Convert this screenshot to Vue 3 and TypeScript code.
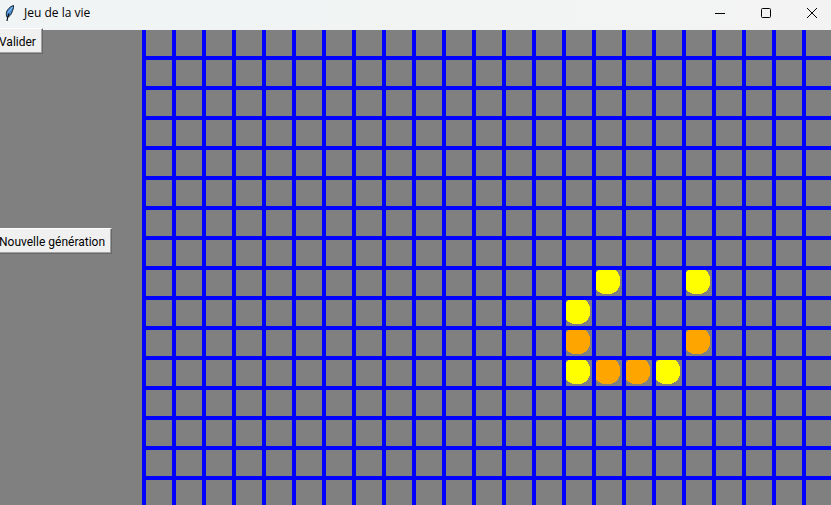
<script setup lang="ts">
import { ref } from 'vue'

interface Cell {
  col: number
  row: number
  state: 'newborn' | 'dying'
}

const SIZE = 30

const cells = ref<Cell[]>([
  { col: 15, row: 8, state: 'newborn' },
  { col: 18, row: 8, state: 'newborn' },
  { col: 14, row: 9, state: 'newborn' },
  { col: 14, row: 10, state: 'dying' },
  { col: 18, row: 10, state: 'dying' },
  { col: 14, row: 11, state: 'newborn' },
  { col: 15, row: 11, state: 'dying' },
  { col: 16, row: 11, state: 'dying' },
  { col: 17, row: 11, state: 'newborn' },
])
</script>

<template>
  <div class="window">
    <header class="titlebar">
      <svg class="feather" viewBox="0 0 12 18" aria-hidden="true">
        <path d="M9.500 1.500C6 2.500 2.500 6 2.300 9.500C2.200 11 2.500 12.500 3.300 13.500C5.500 12.500 7.300 10.500 8 8C8.800 6 9.800 4 9.500 1.500Z" fill="#4a8fd8" stroke="#10202c" />
        <path d="M5 9.500C4 12 3.300 14 3 17" fill="none" stroke="#0b1118" stroke-width="1.200" />
        <path d="M8.500 3L4.200 8.500" fill="none" stroke="#8fc0f2" />
      </svg>
      <h1 class="title">Jeu de la vie</h1>
      <nav class="controls" aria-label="Jeu de la vie">
        <button type="button" class="control">
          <svg viewBox="0 0 12 12" aria-hidden="true"><path d="M1 6.500H11" /></svg>
        </button>
        <button type="button" class="control">
          <svg viewBox="0 0 12 12" aria-hidden="true"><rect x="1.500" y="1.500" width="9" height="9" rx="1" /></svg>
        </button>
        <button type="button" class="control">
          <svg viewBox="0 0 12 12" aria-hidden="true"><path d="M1 1L11 11M11 1L1 11" /></svg>
        </button>
      </nav>
    </header>
    <main class="content">
      <aside class="sidebar">
        <button type="button" class="action">Valider</button>
        <button type="button" class="action">Nouvelle génération</button>
      </aside>
      <svg class="board" shape-rendering="crispEdges">
        <defs>
          <pattern id="lines" :width="SIZE" :height="SIZE" patternUnits="userSpaceOnUse">
            <path d="M0 0H4V30H0ZM4 26H30V30H4Z" fill="#0000ff" />
          </pattern>
        </defs>
        <rect
          v-for="cell in cells"
          :key="`${cell.col}-${cell.row}`"
          :class="cell.state"
          :x="cell.col * SIZE + 2"
          :y="cell.row * SIZE - 2"
          width="26"
          height="26"
          rx="11"
        />
        <rect width="100%" height="100%" fill="url(#lines)" />
      </svg>
    </main>
  </div>
</template>

<style>
body {
  margin: 0;
}
</style>

<style scoped>
.window {
  display: flex;
  flex-direction: column;
  height: 100vh;
  overflow: hidden;
  background: #808080;
  color: #000;
  font-family: "Open Sans", "Noto Sans", sans-serif;
  font-size: 12px;
}

.titlebar {
  display: flex;
  flex: none;
  align-items: center;
  box-sizing: border-box;
  height: 30px;
  padding: 0 0 4px 4px;
  background: linear-gradient(90deg, #f0f4f4, #f3f3f3);
}

.feather {
  width: 12px;
  height: 18px;
}

.title {
  margin: 0 auto 0 8px;
  font-size: 12px;
  font-weight: 400;
  line-height: 16px;
}

.controls {
  display: flex;
  margin-right: -4px;
}

.control {
  display: flex;
  align-items: center;
  justify-content: center;
  width: 46px;
  height: 24px;
  padding: 0;
  border: 0;
  background: transparent;
}

.control svg {
  width: 12px;
  height: 12px;
  fill: none;
  stroke: #000;
}

.content {
  display: flex;
  flex: 1;
  min-height: 0;
}

.sidebar {
  display: flex;
  flex: none;
  flex-direction: column;
  align-items: flex-start;
  gap: 174px;
  width: 142px;
  margin-top: -2px;
}

.action {
  height: 26px;
  margin-left: -7px;
  padding: 1px 6px 0 5px;
  border: 1px solid;
  border-color: #fff #696969 #696969 #fff;
  background: #f0f0f0;
  box-shadow: inset -1px -1px #a0a0a0;
  color: #000;
  font-family: Roboto, "Open Sans", sans-serif;
  font-size: 12px;
  line-height: 16px;
  white-space: nowrap;
}

.board {
  display: block;
  flex: 1;
  min-width: 0;
  height: 100%;
}

.newborn {
  fill: #ffff00;
}

.dying {
  fill: #ffa500;
}
</style>
